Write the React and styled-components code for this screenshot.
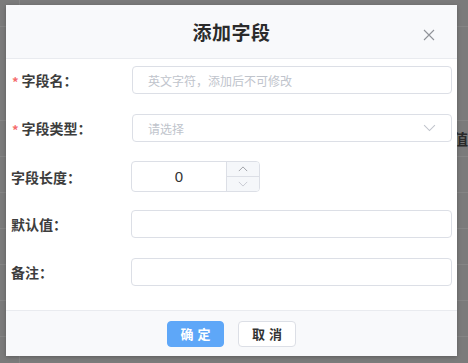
import React from 'react';
import styled, { createGlobalStyle } from 'styled-components';

const GlobalStyle = createGlobalStyle`
  html, body {
    margin: 0;
    padding: 0;
    width: 468px;
    height: 363px;
    overflow: hidden;
    background: #7b7b7b;
    font-family: "Noto Sans CJK SC", "Noto Sans", sans-serif;
  }
`;

const Page = styled.div`
  position: relative;
  width: 468px;
  height: 363px;
  background: #7b7b7b;
  overflow: hidden;
`;

const BackTable = styled.div`
  display: grid;
  grid-template-columns: 20px 1fr;
  grid-template-rows: 27px 94px repeat(8, 36px);
`;

const BackCell = styled.div`
  border-bottom: 1px solid #858585;
  border-right: ${(p) => (p.first ? '1px solid #858585' : 'none')};
  color: #2a2a2a;
  font-size: 15px;
  font-weight: 700;
  display: flex;
  align-items: center;
  justify-content: flex-end;
  padding-right: 0;
  overflow: hidden;
  white-space: nowrap;
`;

const Overlay = styled.div`
  position: absolute;
  inset: 0;
  padding: 5px 0 0 6px;
`;

const Dialog = styled.div`
  width: 451px;
  height: 351px;
  background: #fff;
  box-shadow: 0 1px 4px rgba(0, 0, 0, 0.25);
  display: flex;
  flex-direction: column;
`;

const Header = styled.div`
  position: relative;
  height: 53px;
  background: #f8f9fb;
  border-bottom: 1px solid #e9ebef;
  display: flex;
  align-items: center;
  justify-content: center;
`;

const Title = styled.h2`
  margin: 0;
  font-size: 19px;
  font-weight: 700;
  color: #2b2b2b;
  letter-spacing: 0.5px;
`;

const Close = styled.button`
  position: absolute;
  right: 22px;
  top: 24px;
  width: 12px;
  height: 12px;
  padding: 0;
  border: none;
  background: none;
  display: flex;
`;

const Body = styled.div`
  flex: 1;
  padding: 7px 5px 0 5px;
  display: flex;
  flex-direction: column;
  gap: 20px;
`;

const Row = styled.div`
  display: flex;
  align-items: center;
`;

const Label = styled.label`
  width: 120px;
  flex: none;
  font-size: 14px;
  font-weight: 600;
  color: #3d3d3d;
  display: flex;
  align-items: center;
  padding-left: ${(p) => (p.required ? '1px' : '0')};
`;

const Star = styled.span`
  color: #f56c6c;
  font-size: 13px;
  margin-right: 3px;
  margin-top: 2px;
`;

const Input = styled.div`
  flex: 1;
  height: 26px;
  border: 1px solid #dcdfe6;
  border-radius: 4px;
  display: flex;
  align-items: center;
  padding: 0 15px;
  font-size: 12px;
  color: #c0c4cc;
  justify-content: space-between;
`;

const NumberBox = styled.div`
  width: 127px;
  height: 29px;
  border: 1px solid #dcdfe6;
  border-radius: 4px;
  display: flex;
  overflow: hidden;
`;

const NumberValue = styled.div`
  flex: 1;
  display: flex;
  align-items: center;
  justify-content: center;
  font-size: 15px;
  color: #333;
  font-family: "Liberation Sans", Arial, sans-serif;
`;

const Stepper = styled.div`
  width: 32px;
  border-left: 1px solid #dcdfe6;
  display: flex;
  flex-direction: column;
  background: #f5f7fa;
`;

const Step = styled.div`
  flex: 1;
  display: flex;
  align-items: center;
  justify-content: center;
  border-top: ${(p) => (p.down ? '1px solid #dcdfe6' : 'none')};
`;

const Footer = styled.div`
  height: 45px;
  background: #f8f9fb;
  border-top: 1px solid #e9ebef;
  display: flex;
  align-items: center;
  justify-content: center;
  gap: 14px;
`;

const Button = styled.button`
  width: ${(p) => (p.primary ? '57px' : '58px')};
  height: 26px;
  border-radius: 4px;
  border: 1px solid ${(p) => (p.primary ? '#5ea7f8' : '#dcdfe6')};
  background: ${(p) => (p.primary ? '#5ea7f8' : '#fff')};
  color: ${(p) => (p.primary ? '#fff' : '#333')};
  font-family: "Noto Sans CJK SC", sans-serif;
  font-size: 13px;
  font-weight: 700;
  letter-spacing: 4px;
  padding: 0 0 0 4px;
  display: flex;
  align-items: center;
  justify-content: center;
`;

const Chevron = ({ up, size = 12, color = '#c0c4cc' }) => (
  <svg width={size} height={size * 0.6} viewBox="0 0 12 7" fill="none">
    <path
      d={up ? 'M1 6L6 1L11 6' : 'M1 1L6 6L11 1'}
      stroke={color}
      strokeWidth="1"
    />
  </svg>
);

const rows = ['', '', '值', '', '', '', '', '', '', ''];

export default function App() {
  return (
    <Page>
      <GlobalStyle />
      <BackTable>
        {rows.map((r, i) => (
          <React.Fragment key={i}>
            <BackCell first />
            <BackCell>{r}</BackCell>
          </React.Fragment>
        ))}
      </BackTable>
      <Overlay>
        <Dialog>
          <Header>
            <Title>添加字段</Title>
            <Close>
              <svg width="12" height="12" viewBox="0 0 12 12">
                <path d="M1 1L11 11M11 1L1 11" stroke="#909399" strokeWidth="1.1" />
              </svg>
            </Close>
          </Header>
          <Body>
            <Row>
              <Label required><Star>*</Star>字段名：</Label>
              <Input>英文字符，添加后不可修改</Input>
            </Row>
            <Row>
              <Label required><Star>*</Star>字段类型：</Label>
              <Input>
                请选择
                <Chevron size={13} />
              </Input>
            </Row>
            <Row style={{ marginTop: -1, marginBottom: -2 }}>
              <Label>字段长度：</Label>
              <NumberBox>
                <NumberValue>0</NumberValue>
                <Stepper>
                  <Step><Chevron up size={10} color="#909399" /></Step>
                  <Step down><Chevron size={10} color="#c0c4cc" /></Step>
                </Stepper>
              </NumberBox>
            </Row>
            <Row>
              <Label>默认值：</Label>
              <Input />
            </Row>
            <Row>
              <Label>备注：</Label>
              <Input />
            </Row>
          </Body>
          <Footer>
            <Button primary>确定</Button>
            <Button>取消</Button>
          </Footer>
        </Dialog>
      </Overlay>
    </Page>
  );
}
